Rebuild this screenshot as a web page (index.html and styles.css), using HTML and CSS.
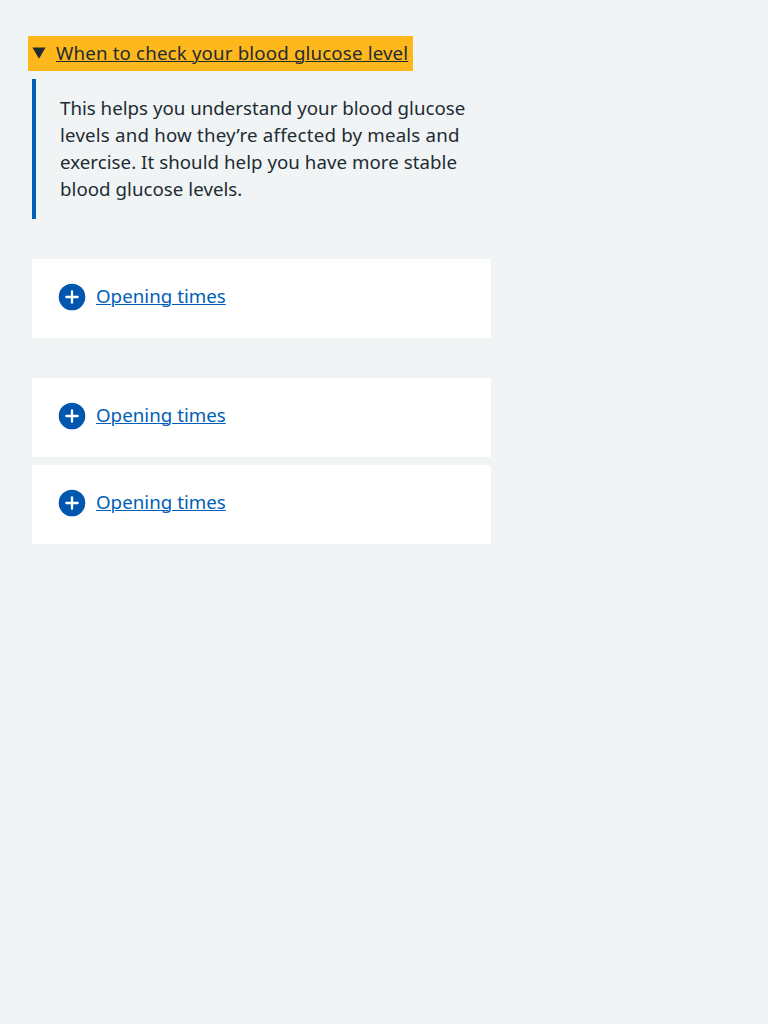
FILE: index.html
```html
<!DOCTYPE html>
<html lang="en">
<head>
<meta charset="utf-8">
<title>Details</title>
<link rel="stylesheet" href="styles.css">
</head>
<body>
<main class="container">
  <section class="details">
    <div class="details-summary">
      <svg class="arrow" width="14" height="12" viewBox="0 0 14 12"><path d="M.4 .5H13.6L7 11.8Z" fill="#212b32"/></svg>
      <span class="details-title">When to check your blood glucose level</span>
    </div>
    <div class="details-text">
      <p><span class="line line-1">This helps you understand your blood glucose</span>
      <span class="line line-2">levels and how they’re affected by meals and</span>
      <span class="line line-3">exercise. It should help you have more stable</span>
      <span class="line line-4">blood glucose levels.</span></p>
    </div>
  </section>
  <section class="expander">
    <svg class="plus" width="28" height="28" viewBox="0 0 28 28"><circle cx="14" cy="14" r="13.3" fill="#0057ad"/><path d="M14 8.3V19.7M8.3 14H19.7" stroke="#fff" stroke-width="2.3" stroke-linecap="round"/></svg>
    <span class="expander-title">Opening times</span>
  </section>
  <div class="expander-group">
    <section class="expander">
      <svg class="plus" width="28" height="28" viewBox="0 0 28 28"><circle cx="14" cy="14" r="13.3" fill="#0057ad"/><path d="M14 8.3V19.7M8.3 14H19.7" stroke="#fff" stroke-width="2.3" stroke-linecap="round"/></svg>
      <span class="expander-title">Opening times</span>
    </section>
    <section class="expander">
      <svg class="plus" width="28" height="28" viewBox="0 0 28 28"><circle cx="14" cy="14" r="13.3" fill="#0057ad"/><path d="M14 8.3V19.7M8.3 14H19.7" stroke="#fff" stroke-width="2.3" stroke-linecap="round"/></svg>
      <span class="expander-title">Opening times</span>
    </section>
  </div>
</main>
</body>
</html>
```
FILE: styles.css
```css
* { box-sizing: border-box; }
body {
  margin: 0;
  background: #f0f4f5;
  color: #212b32;
  font: 18.7px/27px "Noto Sans", "Open Sans", sans-serif;
}
.container {
  width: 491px;
  padding: 36px 0 0 32px;
  display: flex;
  flex-direction: column;
  gap: 40px;
}
.details { display: flex; flex-direction: column; gap: 8px; }
.details-summary {
  display: flex;
  width: 385px;
  height: 35px;
  margin-left: -4px;
  padding: 4px;
  background: #ffb81c;
}
.arrow { margin: 7px 10px 0 0; flex: none; }
.details-title, .expander-title {
  margin-top: -1px;
  white-space: nowrap;
  text-decoration: underline;
  text-decoration-thickness: 1px;
  text-underline-offset: 1px;
}
.details-title { letter-spacing: 0.16px; }
.expander-title { letter-spacing: 0.03px; }
.details-text {
  height: 140px;
  padding: 15px 0 16px 24px;
  border-left: 4px solid #005eb8;
}
.details-text p { margin: 0; }
.line { display: block; white-space: nowrap; }
.line-1 { letter-spacing: 0.01px; }
.line-2 { letter-spacing: 0.2px; }
.line-3 { letter-spacing: 0.04px; }
.line-4 { letter-spacing: 0.04px; }
.expander {
  display: flex;
  height: 79px;
  padding: 24px 26px;
  background: #fff;
  color: #005eb8;
}
.plus { flex: none; margin-right: 10px; }
.expander-group { display: flex; flex-direction: column; gap: 8px; }
```
